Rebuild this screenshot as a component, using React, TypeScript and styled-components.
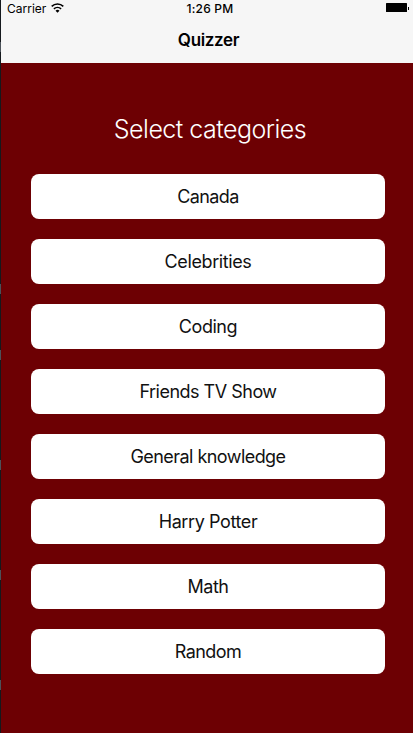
import React from "react";
import styled, { createGlobalStyle } from "styled-components";

const GlobalStyle = createGlobalStyle`
  body { margin: 0; background: #6d0003; }
  * { box-sizing: border-box; }
`;

const Frame = styled.div`
  display: flex;
  width: 413px;
  height: 733px;
  overflow: hidden;
  font-family: Inter, "Liberation Sans", sans-serif;
`;

const Edge = styled.div`
  display: flex;
  flex-direction: column;
  width: 1px;
  flex: none;
  background: #15191d;
`;

const EdgeMark = styled.div<{ $gap: number }>`
  height: 10px;
  flex: none;
  margin-top: ${(p) => p.$gap}px;
  background: #4b5259;
`;

const Screen = styled.div`
  display: flex;
  flex: 1;
  flex-direction: column;
  background: #6d0003;
`;

const Header = styled.header`
  height: 63px;
  flex: none;
  background: #f6f6f6;
  color: #000;
`;

const StatusBar = styled.div`
  display: grid;
  grid-template-columns: 1fr auto 1fr;
  align-items: center;
  height: 17px;
  padding: 0 3px 0 6px;
`;

const Carrier = styled.div`
  display: flex;
  align-items: center;
  gap: 5px;
  font-size: 12px;
  line-height: 17px;
  letter-spacing: 0;
`;

const WifiIcon = styled.svg`
  margin-top: -2px;
`;

const Clock = styled.div`
  padding-left: 3px;
  font-size: 12px;
  line-height: 17px;
  font-weight: 500;
  letter-spacing: 0.2px;
`;

const Battery = styled.svg`
  justify-self: end;
  margin-top: -1px;
`;

const Title = styled.h1`
  margin: 13px 0 0 3px;
  font-size: 17px;
  line-height: 21px;
  font-weight: 600;
  letter-spacing: -0.35px;
  text-align: center;
`;

const Heading = styled.h2`
  margin: 50px 0 0 6px;
  font-size: 25px;
  line-height: 32px;
  font-weight: 350;
  letter-spacing: -0.52px;
  text-align: center;
  color: #fff;
`;

const List = styled.div`
  display: flex;
  flex-direction: column;
  gap: 20px;
  margin: 29px 28px 0 30px;
`;

const Category = styled.button<{ $spacing: number }>`
  height: 45px;
  padding: 0;
  border: 0;
  border-radius: 8px;
  background: #fff;
  color: #111;
  font: 400 18px/45px Inter, "Liberation Sans", sans-serif;
  letter-spacing: ${(p) => p.$spacing}px;
`;

const marks = [42, 232, 56, 100, 100, 100];

const categories = [
  { label: "Canada", spacing: -0.6 },
  { label: "Celebrities", spacing: -0.4 },
  { label: "Coding", spacing: -0.45 },
  { label: "Friends TV Show", spacing: -0.5 },
  { label: "General knowledge", spacing: -0.55 },
  { label: "Harry Potter", spacing: -0.4 },
  { label: "Math", spacing: -0.5 },
  { label: "Random", spacing: -0.55 },
];

export default function App() {
  return (
    <Frame>
      <GlobalStyle />
      <Edge>
        {marks.map((gap, i) => (
          <EdgeMark key={i} $gap={gap} />
        ))}
      </Edge>
      <Screen>
        <Header>
          <StatusBar>
            <Carrier>
              Carrier
              <WifiIcon width="13" height="10" viewBox="0 0 13 10" fill="none" stroke="#000" strokeWidth="1.6">
                <path d="M.7 3.4a8.3 8.3 0 0 1 11.6 0M2.9 5.9a5.2 5.2 0 0 1 7.2 0" />
                <path d="M6.5 9.7 4.5 7.7a2.9 2.9 0 0 1 4 0Z" fill="#000" stroke="none" />
              </WifiIcon>
            </Carrier>
            <Clock>1:26 PM</Clock>
            <Battery width="24" height="10" viewBox="0 0 24 10">
              <rect x="0" y="0" width="21" height="9" rx="0.5" />
              <rect x="22" y="4" width="1" height="3" />
            </Battery>
          </StatusBar>
          <Title>Quizzer</Title>
        </Header>
        <Heading>Select categories</Heading>
        <List>
          {categories.map((c) => (
            <Category key={c.label} $spacing={c.spacing}>
              {c.label}
            </Category>
          ))}
        </List>
      </Screen>
    </Frame>
  );
}
